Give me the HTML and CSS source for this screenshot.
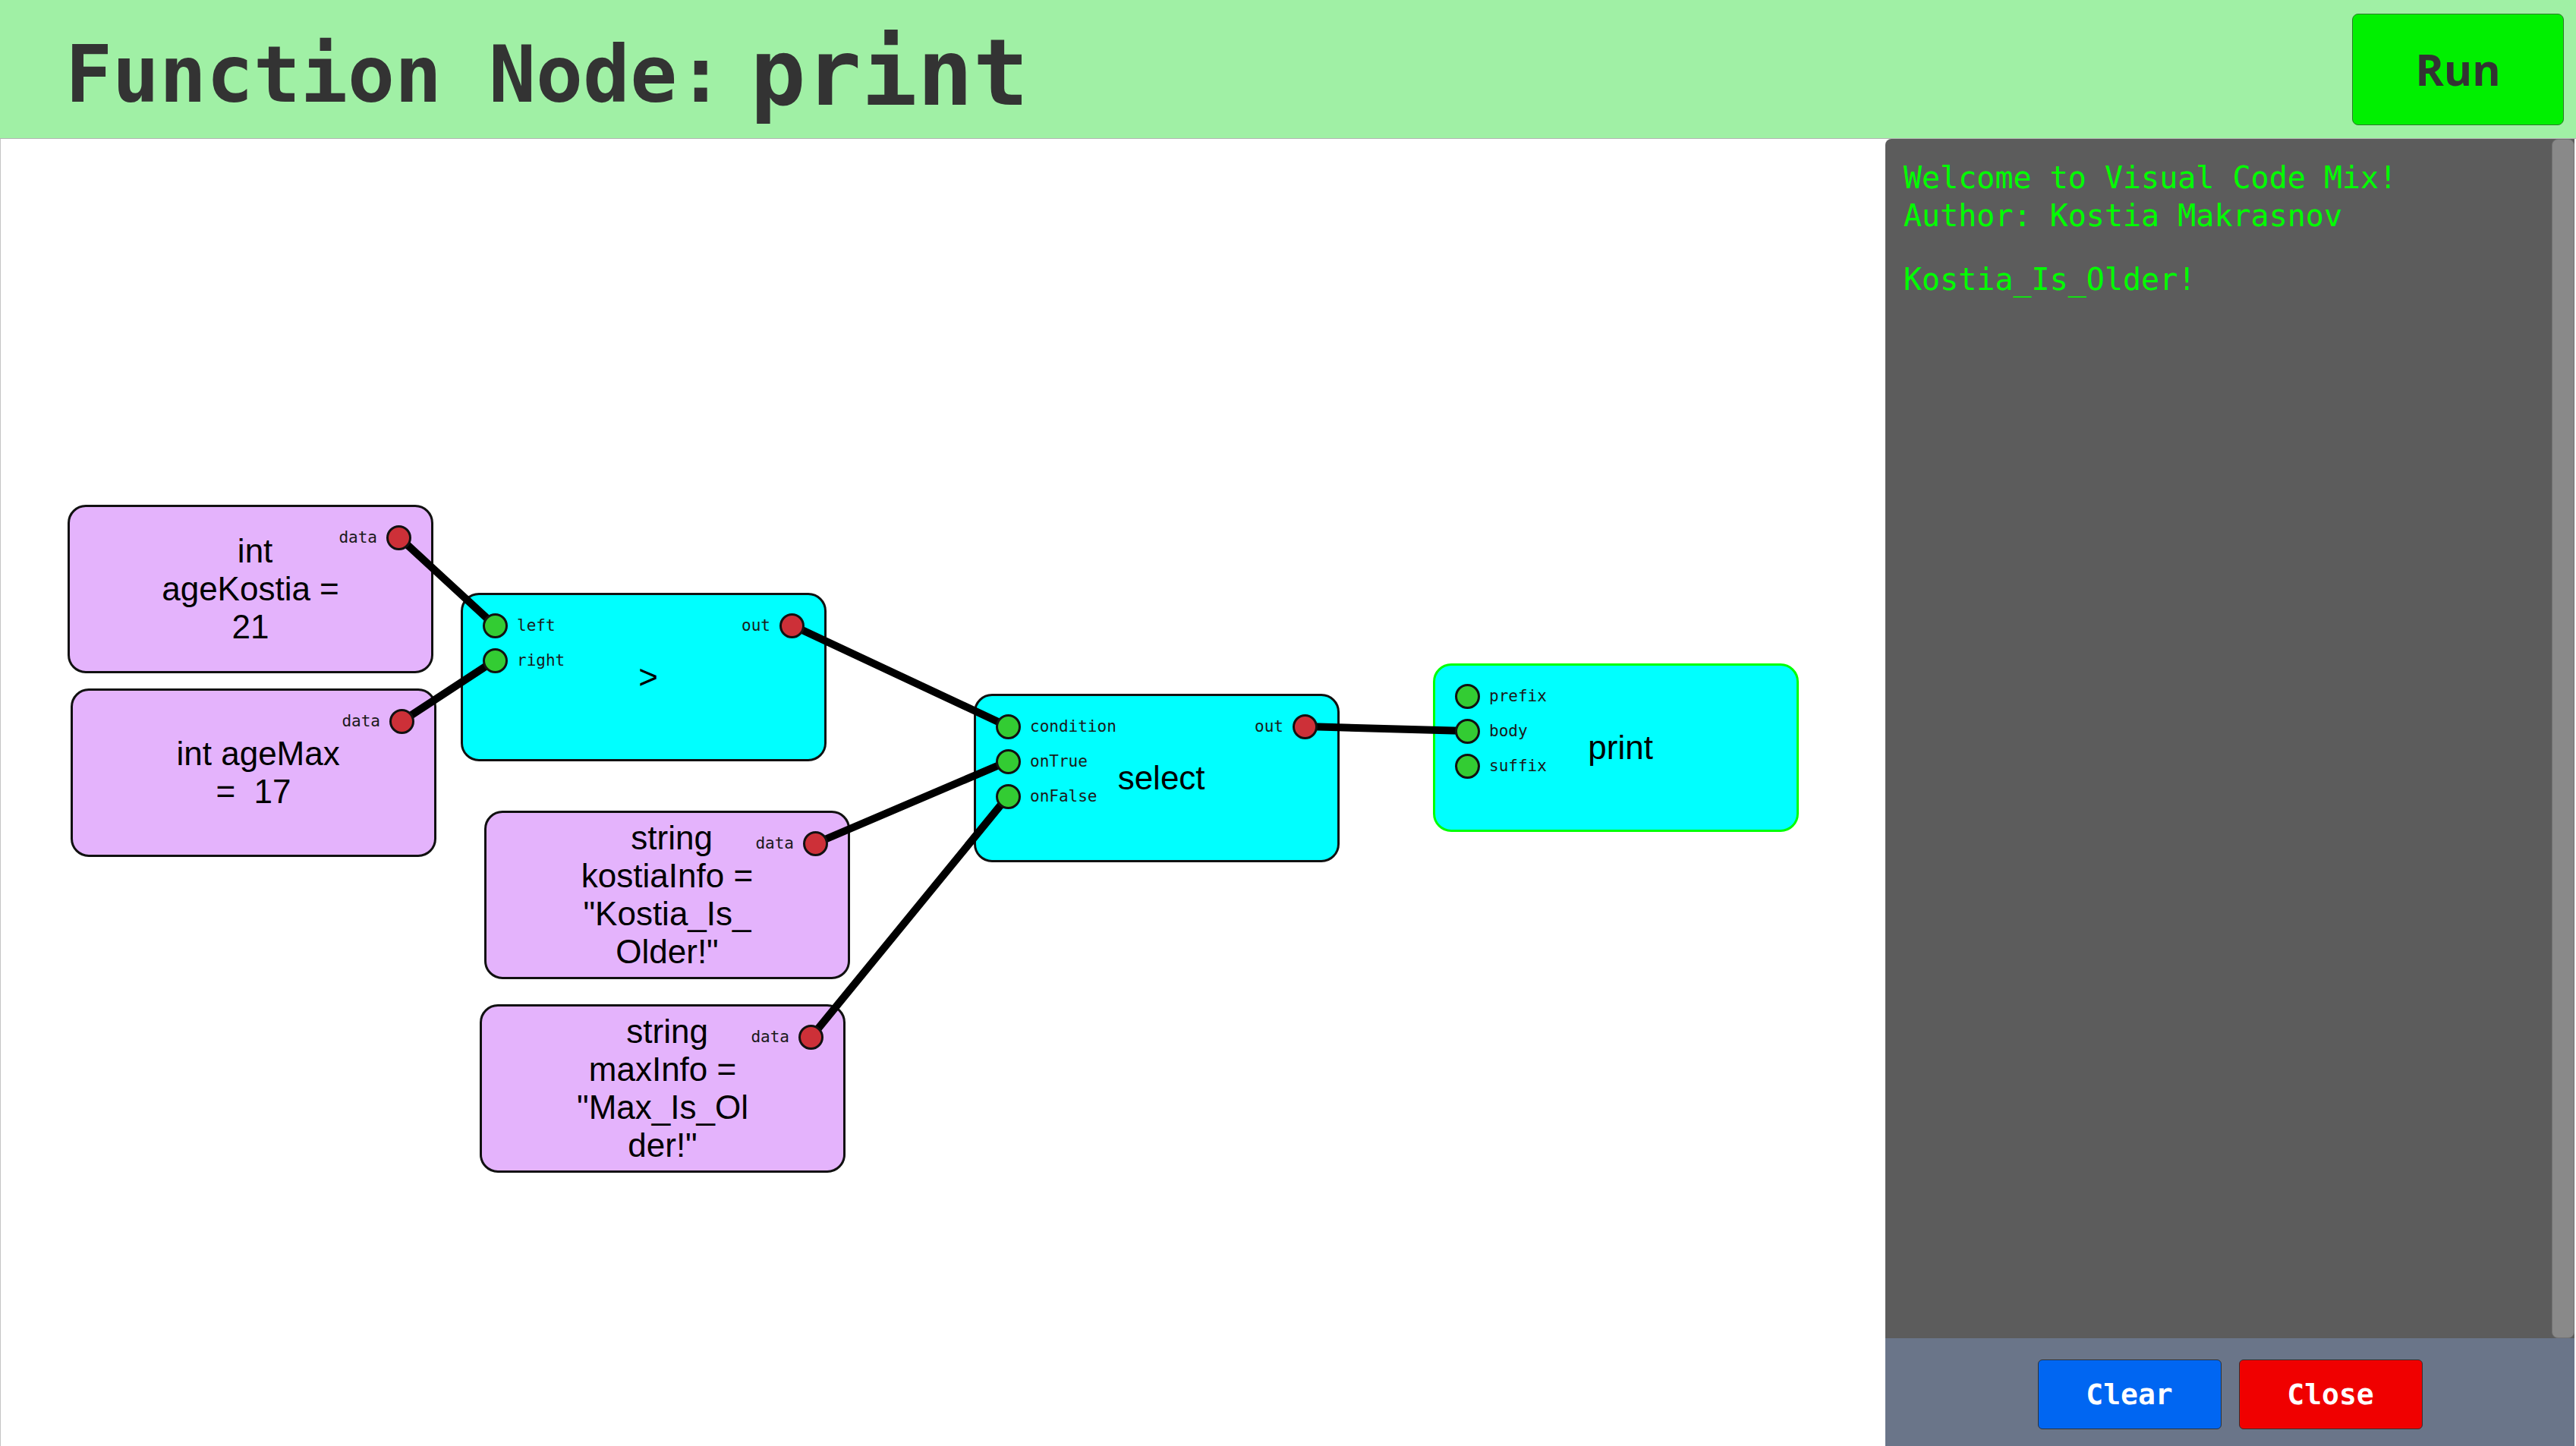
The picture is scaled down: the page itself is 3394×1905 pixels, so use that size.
FILE: index.html
```html
<!DOCTYPE html>
<html lang="en">
<head>
    <meta charset="UTF-8">
    <title>Visual Code Mix</title>
    <link rel="stylesheet" href="styles.css">
</head>
<body>
    <div class="header">
        <h1 class="title">Function Node:<span class="func-name">print</span></h1>
        <button class="run-btn">Run</button>
    </div>

    <div class="main">
        <div class="canvas">
            <!-- noeuds valeurs -->
            <div class="node value" style="left:88px;top:482px">
                <div class="node-text">&nbsp;int ageKostia = 21</div>
                <div class="ports-out">
                    <div class="port"><span>data</span><i class="dot out"></i></div>
                </div>
            </div>
            <div class="node value" style="left:92px;top:724px">
                <div class="node-text">&nbsp;int ageMax = &nbsp;17</div>
                <div class="ports-out">
                    <div class="port"><span>data</span><i class="dot out"></i></div>
                </div>
            </div>
            <div class="node value" style="left:637px;top:885px">
                <div class="node-text">&nbsp;string kostiaInfo = "Kostia_Is_Older!"</div>
                <div class="ports-out">
                    <div class="port"><span>data</span><i class="dot out"></i></div>
                </div>
            </div>
            <div class="node value" style="left:631px;top:1140px">
                <div class="node-text">&nbsp;string maxInfo = "Max_Is_Older!"</div>
                <div class="ports-out">
                    <div class="port"><span>data</span><i class="dot out"></i></div>
                </div>
            </div>

            <!-- noeuds fonctions -->
            <div class="node func" style="left:606px;top:598px">
                <div class="node-text">&nbsp;&gt;</div>
                <div class="ports-in">
                    <div class="port"><i class="dot in"></i><span>left</span></div>
                    <div class="port"><i class="dot in"></i><span>right</span></div>
                </div>
                <div class="ports-out">
                    <div class="port"><span>out</span><i class="dot out"></i></div>
                </div>
            </div>
            <div class="node func" style="left:1282px;top:731px">
                <div class="node-text">&nbsp;select</div>
                <div class="ports-in">
                    <div class="port"><i class="dot in"></i><span>condition</span></div>
                    <div class="port"><i class="dot in"></i><span>onTrue</span></div>
                    <div class="port"><i class="dot in"></i><span>onFalse</span></div>
                </div>
                <div class="ports-out">
                    <div class="port"><span>out</span><i class="dot out"></i></div>
                </div>
            </div>
            <div class="node func selected" style="left:1887px;top:691px">
                <div class="node-text">&nbsp;print</div>
                <div class="ports-in">
                    <div class="port"><i class="dot in"></i><span>prefix</span></div>
                    <div class="port"><i class="dot in"></i><span>body</span></div>
                    <div class="port"><i class="dot in"></i><span>suffix</span></div>
                </div>
            </div>

            <!-- liens -->
            <svg class="wires" width="2483" height="1722">
                <line x1="525" y1="525" x2="651" y2="641"/>
                <line x1="529" y1="767" x2="651" y2="687"/>
                <line x1="1043" y1="641" x2="1327" y2="774"/>
                <line x1="1074" y1="928" x2="1327" y2="820"/>
                <line x1="1068" y1="1183" x2="1327" y2="866"/>
                <line x1="1719" y1="774" x2="1932" y2="780"/>
            </svg>
        </div>

        <div class="console">
            <div class="log">
                <div class="log-line">Welcome to Visual Code Mix!<br>Author: Kostia Makrasnov</div>
                <div class="log-line">Kostia_Is_Older!</div>
                <div class="scroll-thumb"></div>
            </div>
            <div class="console-bar">
                <button class="btn btn-clear">Clear</button>
                <button class="btn btn-close">Close</button>
            </div>
        </div>
    </div>
</body>
</html>
```

FILE: styles.css
```css
body {
    margin: 0;
    width: 3394px;
    height: 1905px;
    overflow: hidden;
    background: white;
    font-family: "Liberation Sans", Arial, sans-serif;
}
.header {
    height: 183px;
    box-sizing: border-box;
    background: #a0f0a5;
    border-bottom: 1px solid #b4b4b4;
    display: flex;
    align-items: center;
    justify-content: space-between;
    padding: 0 16px 0 86px;
}
.title {
    margin: 0;
    font-family: "DejaVu Sans Mono", monospace;
    font-size: 103px;
    font-weight: bold;
    color: #333;
    line-height: 1;
    padding-top: 10px;
}
.func-name {
    font-size: 122px;
    margin-left: 34px;
    vertical-align: -4px;
}
.run-btn {
    width: 279px;
    height: 147px;
    background: #00f000;
    border: 1px solid #2c7a2c;
    border-radius: 8px;
    font-family: "Open Sans", sans-serif;
    font-weight: bold;
    font-size: 57px;
    color: #333;
    cursor: pointer;
}
.main {
    display: flex;
    height: 1722px;
}
.canvas {
    flex: 1;
    position: relative;
    border-left: 1px solid #c4c4c4;
}
.node {
    position: absolute;
    width: 482px;
    height: 222px;
    box-sizing: border-box;
    border: 3px solid #111;
    border-radius: 24px;
    display: flex;
    align-items: center;
    justify-content: center;
}
.value {
    background: #e4b3fc;
}
.func {
    background: #00ffff;
}
.func.selected {
    border-color: #00ff00;
}
.node-text {
    width: 240px;
    text-align: center;
    font-size: 44px;
    color: #000;
    overflow-wrap: anywhere;
}
.ports-in, .ports-out {
    position: absolute;
    top: 24px;
    display: flex;
    flex-direction: column;
    gap: 14px;
}
.ports-in {
    left: 26px;
}
.ports-out {
    right: 26px;
}
.port {
    display: flex;
    align-items: center;
    gap: 12px;
    height: 32px;
    font-family: "DejaVu Sans Mono", monospace;
    font-size: 21px;
    color: #1a1a1a;
}
.dot {
    width: 33px;
    height: 33px;
    box-sizing: border-box;
    border: 3px solid #111;
    border-radius: 50%;
    position: relative;
    z-index: 2;
}
.dot.in {
    background: #33cc33;
}
.dot.out {
    background: #cd3038;
}
.wires {
    position: absolute;
    left: 0;
    top: 0;
    z-index: 1;
    pointer-events: none;
}
.wires line {
    stroke: #000;
    stroke-width: 10;
    stroke-linecap: round;
}
.console {
    width: 908px;
    margin-right: 2px;
    display: flex;
    flex-direction: column;
}
.log {
    flex: 1;
    position: relative;
    background: #5c5c5c;
    border-radius: 8px 0 0 0;
    padding: 26px 24px;
    font-family: "DejaVu Sans Mono", monospace;
    font-size: 40px;
    line-height: 50px;
    color: #00ff00;
}
.log-line + .log-line {
    margin-top: 34px;
}
.scroll-thumb {
    position: absolute;
    right: 0;
    top: 0;
    bottom: 0;
    width: 30px;
    box-sizing: border-box;
    background: #898989;
    border: 1px solid #727272;
    border-radius: 8px;
}
.console-bar {
    height: 142px;
    box-sizing: border-box;
    background: #6a7589;
    display: flex;
    justify-content: center;
    align-items: center;
    gap: 23px;
    padding-top: 6px;
}
.btn {
    width: 242px;
    height: 92px;
    border: 1px solid #333;
    border-radius: 6px;
    font-family: "DejaVu Sans Mono", monospace;
    font-weight: bold;
    font-size: 38px;
    color: white;
    cursor: pointer;
}
.btn-clear {
    background: #0066f2;
}
.btn-close {
    background: #f00000;
}
```
